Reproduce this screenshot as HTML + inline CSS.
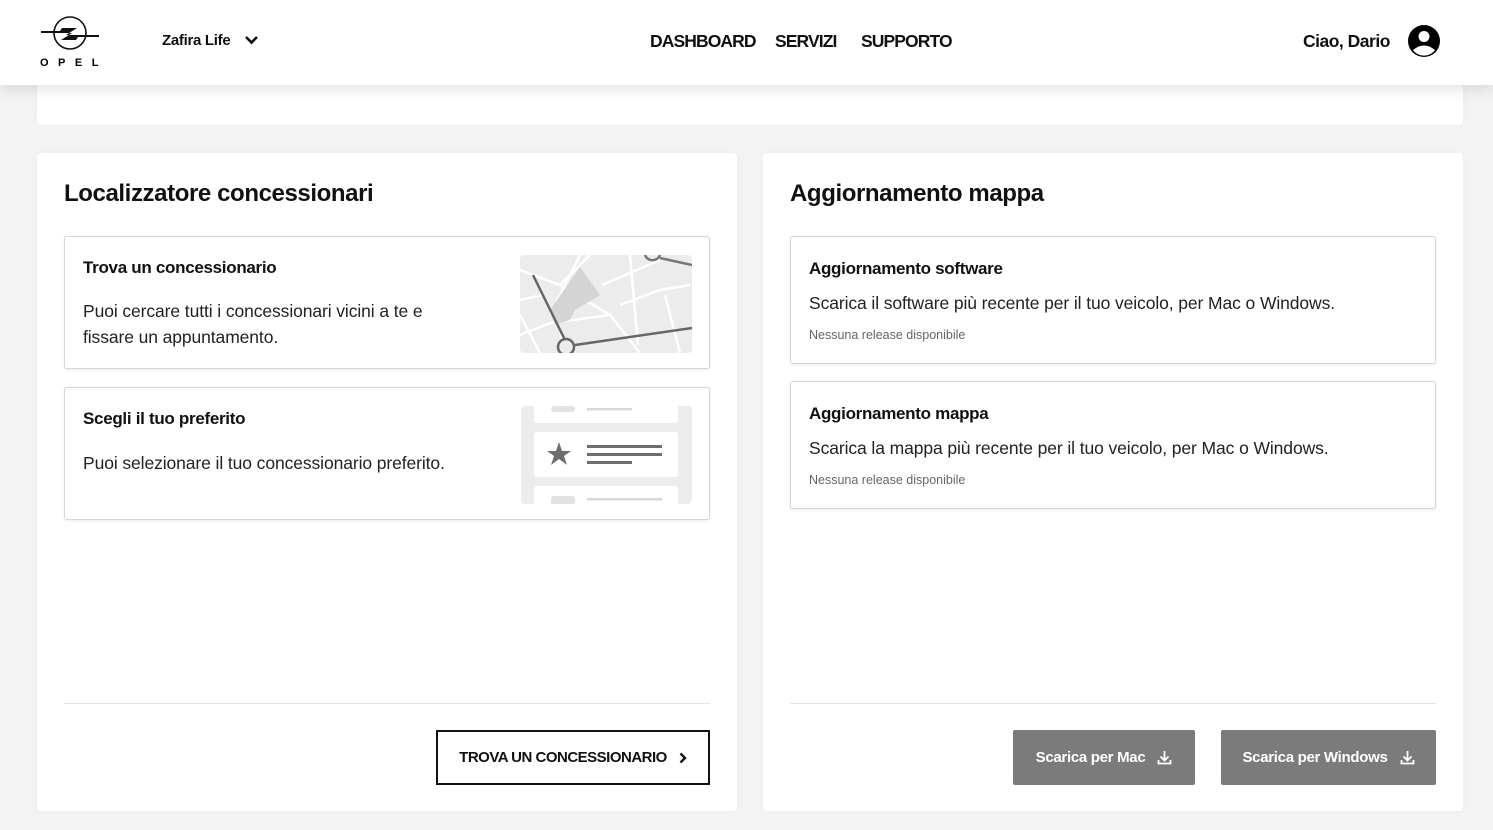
<!DOCTYPE html>
<html><head><meta charset="utf-8">
<style>
*{box-sizing:border-box;margin:0;padding:0}
body{width:1493px;height:830px;overflow:hidden;background:#f3f3f3;font-family:"Liberation Sans",Arial,sans-serif;color:#111;position:relative}
.hdr{position:absolute;left:0;top:0;width:1493px;height:85px;background:#fff;box-shadow:0 4px 14px rgba(0,0,0,.12);z-index:2}
.abs{position:absolute}
.card{position:absolute;background:#fff;border-radius:4px;box-shadow:0 0 6px rgba(0,0,0,.04)}
.h2{position:absolute;font-size:24px;font-weight:bold;letter-spacing:-0.4px}
.box{position:absolute;border:1px solid #d6d6d6;border-radius:3px;background:#fff;box-shadow:0 1px 3px rgba(0,0,0,.08)}
.bt{position:absolute;font-size:17px;font-weight:bold;letter-spacing:-0.3px}
.bd{position:absolute;font-size:17.5px;line-height:26px;letter-spacing:-0.1px;color:#222}
.sm{position:absolute;font-size:12.5px;color:#666}
.nav{font-size:17.5px;font-weight:bold;position:absolute;top:31px;letter-spacing:-0.9px}
.gbtn{position:absolute;top:730px;height:55px;background:#7b7b7b;border-radius:2px;color:#fff;font-size:15px;font-weight:bold;display:flex;align-items:center;justify-content:center;gap:12px;letter-spacing:-0.3px}
</style></head><body>
<div class="hdr">
  <svg class="abs" style="left:38px;top:13px" width="66" height="56" viewBox="0 0 66 56">
    <circle cx="32" cy="20" r="16" fill="none" stroke="#111" stroke-width="1.6"/>
    <path d="M3 18 L22 18 L24 15 L39 15 L28 22 L61 22 L61 24 L40 24 L38 27 L23 27 L34 20 L3 20Z" fill="#111"/>
    <text x="2" y="53" font-size="11" font-weight="bold" font-family="Liberation Sans" letter-spacing="9.5">OPEL</text>
  </svg>
  <div class="abs" style="left:162px;top:32px;font-size:15px;font-weight:bold;letter-spacing:-0.3px">Zafira Life</div>
  <svg class="abs" style="left:244px;top:34px" width="15" height="12" viewBox="0 0 15 12"><path d="M2 3 L7.5 8.5 L13 3" fill="none" stroke="#111" stroke-width="2.6"/></svg>
  <div class="nav" style="left:650px">DASHBOARD</div>
  <div class="nav" style="left:775px">SERVIZI</div>
  <div class="nav" style="left:861px">SUPPORTO</div>
  <div class="nav" style="left:1303px;letter-spacing:-0.5px">Ciao, Dario</div>
  <svg class="abs" style="left:1407px;top:24px" width="34" height="34" viewBox="0 0 34 34">
    <circle cx="17" cy="17" r="16" fill="#000"/>
    <circle cx="17" cy="12.5" r="5.5" fill="#fff"/>
    <path d="M6 26 Q17 17 28 26 A13.5 13.5 0 0 1 6 26Z" fill="#fff"/>
  </svg>
</div>
<div class="card" style="left:37px;top:60px;width:1426px;height:65px"></div>

<div class="card" style="left:37px;top:153px;width:700px;height:658px">
  <div class="h2" style="left:27px;top:27px">Localizzatore concessionari</div>
  <div class="box" style="left:27px;top:83px;width:646px;height:133px">
    <div class="bt" style="left:18px;top:21px">Trova un concessionario</div>
    <div class="bd" style="left:18px;top:61px">Puoi cercare tutti i concessionari vicini a te e<br>fissare un appuntamento.</div>
    <svg class="abs" style="left:455px;top:18px" width="172" height="98" viewBox="0 0 172 98">
      <rect width="172" height="98" rx="4" fill="#ececec"/>
      <g stroke="#fff" stroke-width="2.5" fill="none">
        <path d="M0 15 L40 30 L70 0"/><path d="M40 30 L90 60 L120 98"/><path d="M0 45 L22 40"/><path d="M60 0 L30 60"/><path d="M90 60 L30 68 L0 80"/>
        <path d="M110 0 L118 90"/><path d="M82 30 L140 5"/><path d="M100 50 L140 35 L170 30"/><path d="M145 40 L160 98"/><path d="M40 75 L45 98"/><path d="M0 60 L20 98"/>
      </g>
      <path d="M60 12 L80 40 L55 55 L50 65 L35 70 L30 55 Z" fill="#d4d4d4"/>
      <path d="M13 20 L45 85" stroke="#666" stroke-width="2.5"/>
      <path d="M55 90 L172 73" stroke="#666" stroke-width="2.5"/>
      <circle cx="46" cy="92" r="8" fill="#ececec" stroke="#666" stroke-width="2.5"/>
      <path d="M125 0 A8 8 0 0 0 140 0" fill="none" stroke="#777" stroke-width="2.5"/>
      <path d="M140 3 L172 10" stroke="#777" stroke-width="2.5"/>
    </svg>
  </div>
  <div class="box" style="left:27px;top:234px;width:646px;height:133px">
    <div class="bt" style="left:18px;top:21px">Scegli il tuo preferito</div>
    <div class="bd" style="left:18px;top:62px">Puoi selezionare il tuo concessionario preferito.</div>
    <svg class="abs" style="left:456px;top:18px" width="171" height="98" viewBox="0 0 171 98">
      <rect width="171" height="98" rx="4" fill="#ececec"/>
      <rect x="13" y="-5" width="144" height="22" rx="3" fill="#fff"/>
      <rect x="30" y="0" width="24" height="6" rx="3" fill="#e2e2e2"/><rect x="66" y="2" width="45" height="2.5" fill="#d8d8d8"/>
      <rect x="13" y="26" width="144" height="45" rx="3" fill="#fff"/>
      <path d="M38 36 L41 45 L50 45 L43 50 L46 59 L38 53 L30 59 L33 50 L26 45 L35 45Z" fill="#6e6e6e"/>
      <rect x="66" y="39" width="75" height="3" fill="#6e6e6e"/><rect x="66" y="47" width="75" height="3" fill="#6e6e6e"/><rect x="66" y="55" width="45" height="3" fill="#6e6e6e"/>
      <rect x="13" y="80" width="144" height="25" rx="3" fill="#fff"/>
      <rect x="30" y="90" width="24" height="10" rx="3" fill="#e2e2e2"/><rect x="66" y="92" width="75" height="2.5" fill="#d8d8d8"/>
    </svg>
  </div>
  <div class="abs" style="left:27px;top:550px;width:646px;height:1px;background:#e2e2e2"></div>
  <div class="abs" style="left:399px;top:577px;width:274px;height:55px;border:2px solid #111;display:flex;align-items:center;justify-content:center;gap:12px;font-size:15px;font-weight:bold;letter-spacing:-0.5px">TROVA UN CONCESSIONARIO
    <svg width="8" height="12" viewBox="0 0 8 12"><path d="M1.5 1.5 L6 6 L1.5 10.5" fill="none" stroke="#111" stroke-width="2.4"/></svg></div>
</div>

<div class="card" style="left:763px;top:153px;width:700px;height:658px">
  <div class="h2" style="left:27px;top:27px">Aggiornamento mappa</div>
  <div class="box" style="left:27px;top:83px;width:646px;height:128px">
    <div class="bt" style="left:18px;top:22px">Aggiornamento software</div>
    <div class="bd" style="left:18px;top:53px">Scarica il software più recente per il tuo veicolo, per Mac o Windows.</div>
    <div class="sm" style="left:18px;top:91px">Nessuna release disponibile</div>
  </div>
  <div class="box" style="left:27px;top:228px;width:646px;height:128px">
    <div class="bt" style="left:18px;top:22px">Aggiornamento mappa</div>
    <div class="bd" style="left:18px;top:53px">Scarica la mappa più recente per il tuo veicolo, per Mac o Windows.</div>
    <div class="sm" style="left:18px;top:91px">Nessuna release disponibile</div>
  </div>
  <div class="abs" style="left:27px;top:550px;width:646px;height:1px;background:#e2e2e2"></div>
</div>
<div class="gbtn" style="left:1013px;width:182px">Scarica per Mac
  <svg width="15" height="15" viewBox="0 0 15 15"><path d="M7.5 1 V10 M3.5 6.5 L7.5 10.5 L11.5 6.5 M1.5 10 V13.5 H13.5 V10" fill="none" stroke="#fff" stroke-width="1.8"/></svg></div>
<div class="gbtn" style="left:1221px;width:215px">Scarica per Windows
  <svg width="15" height="15" viewBox="0 0 15 15"><path d="M7.5 1 V10 M3.5 6.5 L7.5 10.5 L11.5 6.5 M1.5 10 V13.5 H13.5 V10" fill="none" stroke="#fff" stroke-width="1.8"/></svg></div>
</body></html>
